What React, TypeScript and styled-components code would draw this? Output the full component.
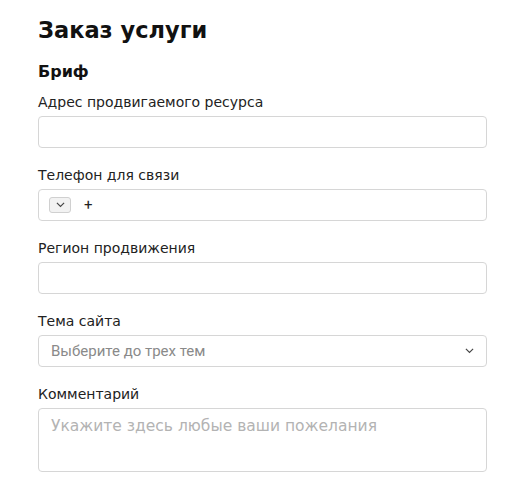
import React from "react";
import styled, { createGlobalStyle } from "styled-components";

const Global = createGlobalStyle`
  html, body { margin: 0; padding: 0; background: #fff; }
  body { font-family: "DejaVu Sans", "Noto Sans", sans-serif; color: #1f1f1f; }
  * { box-sizing: border-box; }
`;

const Page = styled.div`
  width: 449px;
  margin-left: 38px;
  padding-top: 14px;
  display: flex;
  flex-direction: column;
`;

const Title = styled.h1`
  margin: 0;
  font-size: 22.5px;
  line-height: 32px;
  font-weight: 700;
  color: #111;
`;

const Subtitle = styled.h2`
  margin: 14px 0 0;
  font-size: 16px;
  line-height: 24px;
  font-weight: 700;
  color: #111;
`;

const Field = styled.div<{ $first?: boolean }>`
  display: flex;
  flex-direction: column;
  margin-top: ${(p) => (p.$first ? "8px" : "17px")};
`;

const Label = styled.label`
  font-size: 14px;
  line-height: 20px;
  color: #222;
  margin-bottom: 4px;
`;

const Box = styled.div<{ $h?: number }>`
  height: ${(p) => p.$h ?? 32}px;
  border: 1px solid #d6d6d6;
  border-radius: 4px;
  display: flex;
  align-items: center;
  padding: 0 12px;
  background: #fff;
`;

const Select = styled(Box)`
  justify-content: space-between;
  font-family: Roboto, "Noto Sans", sans-serif;
  font-size: 15px;
  color: #8a8a8a;
`;

const CountryBtn = styled.span`
  width: 22px;
  height: 16px;
  border: 1px solid #d0d0d0;
  border-radius: 3px;
  background: #f2f2f2;
  display: inline-flex;
  align-items: center;
  justify-content: center;
  margin-left: -2px;
`;

const Plus = styled.span`
  margin-left: 13px;
  font-family: Roboto, sans-serif;
  font-size: 15px;
  color: #222;
`;

const Textarea = styled(Box)`
  align-items: flex-start;
  padding-top: 8px;
  font-size: 15.5px;
  color: #b3b3b3;
`;

const Chevron = ({ size = 10 }: { size?: number }) => (
  <svg width={size} height={size * 0.6} viewBox="0 0 10 6" fill="none">
    <path d="M1 1l4 4 4-4" stroke="#444" strokeWidth="1.3" />
  </svg>
);

export default function App() {
  return (
    <>
      <Global />
      <Page>
        <Title>Заказ услуги</Title>
        <Subtitle>Бриф</Subtitle>
        <Field $first>
          <Label>Адрес продвигаемого ресурса</Label>
          <Box />
        </Field>
        <Field>
          <Label>Телефон для связи</Label>
          <Box>
            <CountryBtn>
              <Chevron size={9} />
            </CountryBtn>
            <Plus>+</Plus>
          </Box>
        </Field>
        <Field>
          <Label>Регион продвижения</Label>
          <Box />
        </Field>
        <Field>
          <Label>Тема сайта</Label>
          <Select>
            <span>Выберите до трех тем</span>
            <Chevron size={9} />
          </Select>
        </Field>
        <Field>
          <Label>Комментарий</Label>
          <Textarea $h={64}>Укажите здесь любые ваши пожелания</Textarea>
        </Field>
      </Page>
    </>
  );
}
